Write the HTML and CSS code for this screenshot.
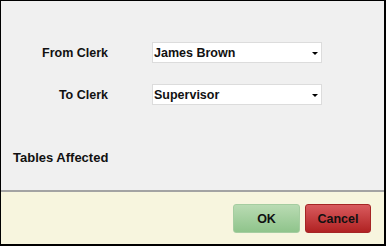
FILE: index.html
```html
<!DOCTYPE html>
<html>
<head>
<meta charset="utf-8">
<link rel="stylesheet" href="styles.css">
</head>
<body>
<div class="dialog">
  <div class="main">
    <div class="form">
      <div class="label">From Clerk</div>
      <div class="select"><span>James Brown</span><i class="arrow"></i></div>
      <div class="label">To Clerk</div>
      <div class="select"><span>Supervisor</span><i class="arrow"></i></div>
    </div>
    <div class="tables">Tables Affected</div>
  </div>
  <div class="footer">
    <button class="btn ok">OK</button>
    <button class="btn cancel">Cancel</button>
  </div>
</div>
</body>
</html>
```
FILE: styles.css
```css
* { box-sizing: border-box; }
html, body { margin: 0; padding: 0; }
body {
  width: 386px;
  height: 246px;
  font-family: "Liberation Sans", Arial, sans-serif;
  font-weight: bold;
  font-size: 12.5px;
  color: #111;
}
.dialog {
  width: 386px;
  height: 246px;
  border-top: 1px solid #000;
  border-left: 1px solid #000;
  border-right: 2px solid #000;
  border-bottom: 2px solid #000;
  display: flex;
  flex-direction: column;
  background: #f0f0f0;
}
.main {
  height: 191px;
  padding-top: 41px;
  border-bottom: 2px solid #a3a3a3;
}
.form {
  display: grid;
  grid-template-columns: 107px 170px;
  column-gap: 44px;
  row-gap: 21px;
  align-items: center;
}
.label {
  text-align: right;
  line-height: 14px;
}
.select {
  height: 21px;
  background: #fff;
  border: 1px solid #dcdcdc;
  display: flex;
  align-items: center;
  justify-content: space-between;
  padding: 0 3px 0 1px;
}
.select span { line-height: 14px; }
.arrow {
  width: 0;
  height: 0;
  border-left: 3px solid transparent;
  border-right: 3px solid transparent;
  border-top: 3px solid #000;
  margin-top: 2px;
}
.tables {
  margin: 46px 0 0 12px;
  line-height: 14px;
  font-size: 13px;
}
.footer {
  flex: 1;
  background: #f7f5de;
  display: flex;
  justify-content: flex-end;
  align-items: flex-start;
  gap: 5px;
  padding: 12px 13px 0 0;
}
.btn {
  font-family: "Liberation Sans", Arial, sans-serif;
  font-weight: bold;
  font-size: 12.5px;
  color: #111;
  height: 29px;
  border-radius: 3px;
  padding: 0;
  margin: 0;
}
.ok {
  width: 67px;
  background: linear-gradient(#b9dbb3, #8fc48b);
  border: 1px solid #a5cda0;
}
.cancel {
  width: 66px;
  background: linear-gradient(#d95b5e, #b02222);
  border: 1px solid #a52525;
}
```
